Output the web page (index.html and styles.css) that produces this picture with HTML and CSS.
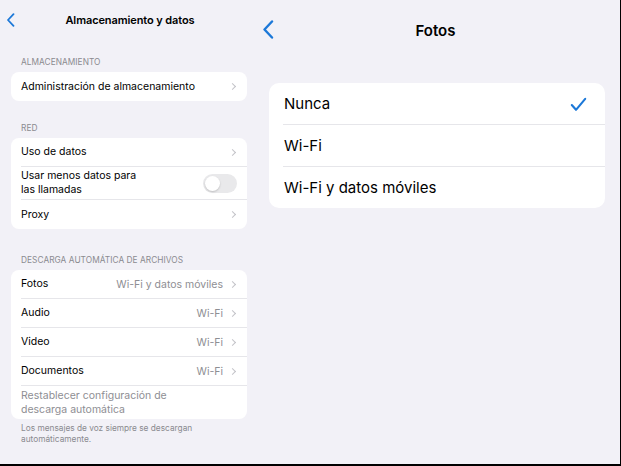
FILE: index.html
```html
<!DOCTYPE html>
<html>
<head>
<meta charset="utf-8">
<link rel="stylesheet" href="styles.css">
</head>
<body>
<div class="screen">
  <div class="pane-left">
    <div class="nav-left">
      <svg class="back-small" width="9" height="14" viewBox="0 0 9 14"><path d="M7.5 1.2 L2 7 L7.5 12.8" fill="none" stroke="#1c78d8" stroke-width="1.8" stroke-linecap="round" stroke-linejoin="round"/></svg>
      <div class="title-left">Almacenamiento y datos</div>
    </div>

    <div class="label label-first">ALMACENAMIENTO</div>
    <div class="card">
      <div class="row"><div class="row-in"><span class="txt">Administración de almacenamiento</span><span class="chev"></span></div></div>
    </div>

    <div class="label label-second">RED</div>
    <div class="card">
      <div class="row"><div class="row-in sep"><span class="txt">Uso de datos</span><span class="chev"></span></div></div>
      <div class="row row-tall"><div class="row-in sep"><span class="txt txt-wrap">Usar menos datos para las llamadas</span><span class="toggle"><span class="knob"></span></span></div></div>
      <div class="row"><div class="row-in"><span class="txt">Proxy</span><span class="chev"></span></div></div>
    </div>

    <div class="label label-third">DESCARGA AUTOMÁTICA DE ARCHIVOS</div>
    <div class="card">
      <div class="row"><div class="row-in sep"><span class="txt">Fotos</span><span class="val">Wi-Fi y datos móviles</span><span class="chev"></span></div></div>
      <div class="row"><div class="row-in sep"><span class="txt">Audio</span><span class="val">Wi-Fi</span><span class="chev"></span></div></div>
      <div class="row"><div class="row-in sep"><span class="txt">Video</span><span class="val">Wi-Fi</span><span class="chev"></span></div></div>
      <div class="row"><div class="row-in sep"><span class="txt">Documentos</span><span class="val">Wi-Fi</span><span class="chev"></span></div></div>
      <div class="row row-tall"><div class="row-in"><span class="txt txt-wrap txt-dim">Restablecer configuración de descarga automática</span></div></div>
    </div>
    <div class="footnote">Los mensajes de voz siempre se descargan automáticamente.</div>
  </div>

  <div class="pane-right">
    <div class="nav-right">
      <svg class="back-big" width="12" height="19" viewBox="0 0 12 19"><path d="M10 1.5 L2.5 9.5 L10 17.5" fill="none" stroke="#1c78d8" stroke-width="2.4" stroke-linecap="round" stroke-linejoin="round"/></svg>
      <div class="title-right">Fotos</div>
    </div>
    <div class="card card-big">
      <div class="opt"><div class="opt-in sep"><span>Nunca</span>
        <svg class="check" width="17" height="15" viewBox="0 0 17 15"><path d="M1.8 8 L6 12.8 L15.2 1.8" fill="none" stroke="#1c78d8" stroke-width="2.1" stroke-linecap="round" stroke-linejoin="round"/></svg>
      </div></div>
      <div class="opt"><div class="opt-in sep"><span>Wi-Fi</span></div></div>
      <div class="opt"><div class="opt-in"><span>Wi-Fi y datos móviles</span></div></div>
    </div>
  </div>
</div>
</body>
</html>
```

FILE: styles.css
```css
html, body {
  margin: 0;
  padding: 0;
}
body {
  width: 621px;
  height: 466px;
  overflow: hidden;
  background: #000;
  font-family: Inter, "Noto Sans", sans-serif;
  color: #000;
}
.screen {
  display: flex;
  width: 620px;
  height: 464px;
  background: #f2f1f7;
}
.pane-left {
  width: 257px;
  flex: none;
  padding: 0 10px 0 11px;
  box-sizing: border-box;
}
.nav-left {
  position: relative;
  height: 40px;
  display: flex;
  align-items: center;
  justify-content: center;
}
.back-small {
  position: absolute;
  left: -5px;
  top: 13px;
}
.title-left {
  font-size: 11px;
  font-weight: 600;
  letter-spacing: -0.1px;
  margin-left: 2px;
}
.label {
  font-size: 8.3px;
  line-height: 12px;
  color: #8a8a8f;
  padding-left: 10px;
  margin-bottom: 4px;
  letter-spacing: 0.05px;
}
.label-first { margin-top: 16px; }
.label-second { margin-top: 21px; }
.label-third { margin-top: 25px; }
.card {
  background: #fff;
  border-radius: 8px;
  overflow: hidden;
}
.row {
  padding-left: 10px;
}
.row-in {
  height: 29px;
  display: flex;
  align-items: center;
  padding-right: 10px;
  box-sizing: border-box;
}
.row-tall .row-in {
  height: 33px;
}
.sep {
  border-bottom: 1px solid #e6e6ea;
}
.txt {
  font-size: 10.5px;
  line-height: 14px;
  flex: 1;
  white-space: nowrap;
}
.txt-wrap {
  white-space: normal;
  flex: 0 1 130px;
}
.txt-dim {
  color: #8e8e93;
  flex-basis: 180px;
}
.val {
  font-size: 10.5px;
  color: #8e8e93;
  margin-right: 7px;
}
.chev {
  width: 4px;
  height: 4px;
  border-top: 1.2px solid #c3c3c8;
  border-right: 1.2px solid #c3c3c8;
  transform: rotate(45deg);
  margin-right: 2px;
}
.toggle {
  margin-left: auto;
  width: 34px;
  height: 19px;
  border-radius: 10px;
  background: #e9e9eb;
  display: flex;
  align-items: center;
  padding-left: 2px;
  box-sizing: border-box;
}
.knob {
  width: 15px;
  height: 15px;
  border-radius: 50%;
  background: #fff;
  box-shadow: 0 1px 2px rgba(0,0,0,0.18);
}
.footnote {
  font-size: 8.3px;
  line-height: 11px;
  color: #8a8a8f;
  padding: 4px 10px 0 10px;
  max-width: 195px;
}

.pane-right {
  flex: 1;
  padding: 0 15px 0 12px;
}
.nav-right {
  position: relative;
  height: 60px;
  display: flex;
  align-items: center;
  justify-content: center;
}
.back-big {
  position: absolute;
  left: -7px;
  top: 20px;
}
.title-right {
  font-size: 15px;
  font-weight: 600;
  margin-left: -3px;
}
.card-big {
  margin-top: 23px;
  border-radius: 10px;
}
.opt {
  padding-left: 14px;
}
.opt-in {
  height: 41px;
  display: flex;
  align-items: center;
  justify-content: space-between;
  padding-left: 1px;
  padding-right: 18px;
  font-size: 15px;
}
.check {
  margin-top: 1px;
}
```
